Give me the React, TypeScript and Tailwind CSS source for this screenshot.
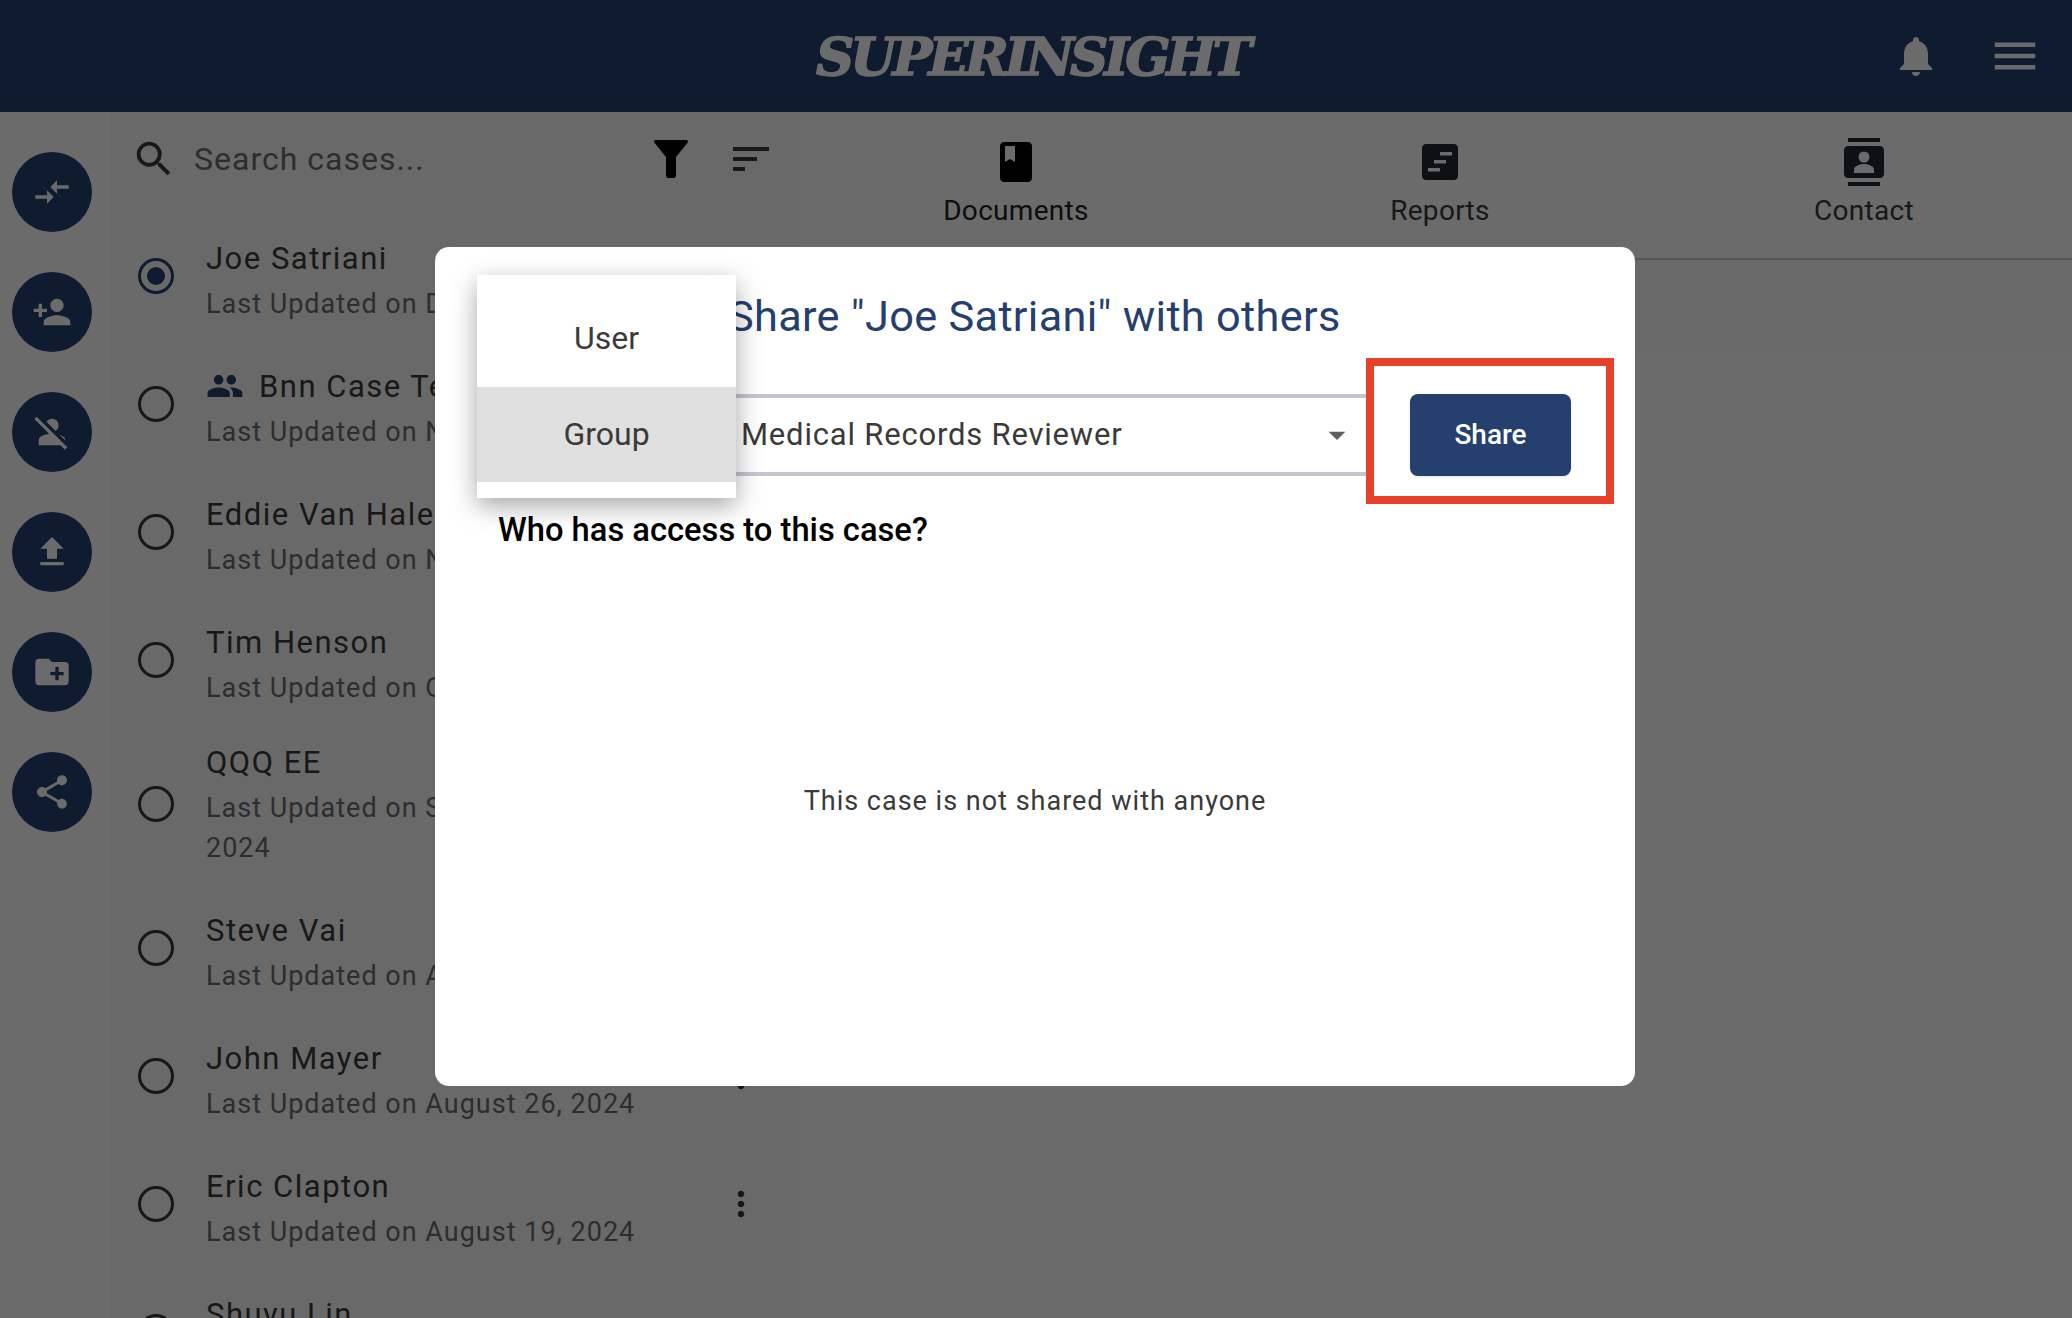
import React from "react";
import {
  MdCompareArrows,
  MdPersonAddAlt1,
  MdPersonOff,
  MdFileUpload,
  MdCreateNewFolder,
  MdShare,
  MdSearch,
  MdSort,
  MdPeople,
  MdMoreVert,
  MdNotifications,
  MdMenu,
  MdArrowDropDown,
} from "react-icons/md";

const sideActions = [
  {Icon: MdCompareArrows},
  {Icon: MdPersonAddAlt1, flip: true},
  {Icon: MdPersonOff},
  {Icon: MdFileUpload},
  {Icon: MdCreateNewFolder},
  {Icon: MdShare},
];

const cases = [
  {name: "Joe Satriani", updated: "Last Updated on December 2, 2024", selected: true},
  {name: "Bnn Case Test", updated: "Last Updated on November 26, 2024", group: true},
  {name: "Eddie Van Halen", updated: "Last Updated on November 12, 2024"},
  {name: "Tim Henson", updated: "Last Updated on October 8, 2024"},
  {name: "QQQ EE", updated: "Last Updated on September 30,", extra: "2024"},
  {name: "Steve Vai", updated: "Last Updated on August 29, 2024"},
  {name: "John Mayer", updated: "Last Updated on August 26, 2024"},
  {name: "Eric Clapton", updated: "Last Updated on August 19, 2024"},
  {name: "Shuyu Lin", updated: "Last Updated on August 12, 2024"},
];

function FunnelIcon() {
  return (
    <svg width="36" height="40" viewBox="0 0 36 40" fill="currentColor">
      <path d="M1 2.5C1 1.5 1.800 1 2.600 1h30.800c.8 0 1.600.5 1.600 1.500 0 .4-.1.7-.3 1L23 18v18.500c0 1.400-1.100 2.500-2.500 2.500h-5c-1.400 0-2.500-1.100-2.500-2.500V18L1.300 3.500c-.2-.3-.3-.6-.3-1z" />
    </svg>
  );
}

function DocumentsIcon() {
  return (
    <svg width="32" height="40" viewBox="0 0 32 40" fill="#000">
      <path fillRule="evenodd" d="M4 0h24c2.200 0 4 1.800 4 4v32c0 2.200-1.800 4-4 4H4c-2.200 0-4-1.800-4-4V4c0-2.200 1.800-4 4-4zm1 4v16l5-3 5 3V4H5z" />
    </svg>
  );
}

function ReportsIcon() {
  return (
    <svg width="36" height="36" viewBox="0 0 36 36" fill="#1f2a2e">
      <path fillRule="evenodd" d="M4 0h28c2.200 0 4 1.800 4 4v28c0 2.200-1.800 4-4 4H4c-2.200 0-4-1.800-4-4V4c0-2.200 1.800-4 4-4zm14 8v3.500h12V8H18zm-6 8v3.500h12V16H12zM6 24v3.500h12V24H6z" />
    </svg>
  );
}

function ContactIcon() {
  return (
    <svg width="40" height="48" viewBox="0 0 40 48" fill="#1f2a2e">
      <rect x="4" y="0" width="32" height="4" />
      <rect x="4" y="44" width="32" height="4" />
      <path fillRule="evenodd" d="M4 8h32c2.200 0 4 1.800 4 4v24c0 2.200-1.800 4-4 4H4c-2.200 0-4-1.800-4-4V12c0-2.200 1.800-4 4-4zm16 5.500a5.500 5.500 0 1 0 0 11 5.500 5.500 0 0 0 0-11zM10 35h20v-3.500c0-3.600-6.700-5.500-10-5.500s-10 1.900-10 5.500V35z" />
    </svg>
  );
}

function CaseRow({item}: {item: any}) {
  return (
    <div className={"flex items-center pl-[28px] pr-[39px] " + (item.extra ? "h-[160px]" : "h-[128px]")}>
      <div className={"flex h-[36px] w-[36px] shrink-0 items-center justify-center rounded-full border-[3px] " + (item.selected ? "border-[#25406f]" : "border-[#3a3a3a]")}>
        {item.selected && <div className="h-[18px] w-[18px] rounded-full bg-[#25406f]" />}
      </div>
      <div className={"ml-[32px] min-w-0 flex-1 " + (item.extra ? "-mt-[4px]" : "pt-[4px]")}>
        <div className="flex items-center whitespace-nowrap text-[31px] leading-[51px] tracking-[1.5px] text-[#3a3a3a]">
          {item.group && <MdPeople className="mr-[15px] text-[#25406f]" size={38} />}
          {item.name}
        </div>
        <div className="whitespace-nowrap text-[27px] leading-[40px] tracking-[1px] text-[#6d6d6d]">
          {item.updated}
        </div>
        {item.extra && (
          <div className="text-[27px] leading-[40px] tracking-[1px] text-[#6d6d6d]">{item.extra}</div>
        )}
      </div>
      <MdMoreVert className="shrink-0 text-[#3a3a3a]" size={40} />
    </div>
  );
}

export default function App() {
  return (
    <div className="relative h-screen w-full overflow-hidden bg-white font-['Roboto',sans-serif]">
      <header className="relative flex h-[112px] items-center justify-center bg-[#25406f]">
        <span className="mr-[8px] text-[53px] font-bold italic leading-none tracking-[-4px] text-white [-webkit-text-stroke:1.5px_white] font-['DejaVu_Serif',serif]">
          SUPERINSIGHT
        </span>
        <div className="absolute right-[30px] top-0 flex h-[112px] items-center gap-[48px] text-white">
          <MdNotifications size={48} />
          <MdMenu size={54} />
        </div>
      </header>

      <div className="flex h-[1206px]">
        <aside className="flex w-[110px] shrink-0 flex-col items-center gap-[40px] pr-[6px] pt-[40px]">
          {sideActions.map(({Icon, flip}, i) => (
            <div key={i} className="flex h-[80px] w-[80px] shrink-0 items-center justify-center rounded-full bg-[#25406f] text-white">
              <Icon size={40} className={flip ? "-scale-x-100" : ""} />
            </div>
          ))}
        </aside>

        <section className="w-[690px] shrink-0 bg-[#fbfbfb]">
          <div className="flex h-[100px] items-center pb-[6px] pl-[21px] pr-[25px] text-[#3a3a3a]">
            <MdSearch size={46} />
            <span className="ml-[17px] flex-1 text-[32px] tracking-[1px] text-[#6d6d6d]">Search cases...</span>
            <span className="text-black"><FunnelIcon /></span>
            <MdSort className="ml-[38px]" size={48} />
          </div>
          <div>
            {cases.map((c) => (
              <CaseRow key={c.name} item={c} />
            ))}
          </div>
        </section>

        <main className="min-w-0 flex-1">
          <div className="grid h-[148px] grid-cols-[repeat(3,424px)] border-b-[2px] border-[#cfcfcf] pl-[4px]">
            <div className="flex flex-col items-center pt-[30px]">
              <div className="flex h-[40px] items-center"><DocumentsIcon /></div>
              <span className="mt-[11px] text-[28px] leading-[36px] tracking-[0.3px] text-[#222]">Documents</span>
            </div>
            <div className="flex flex-col items-center pt-[30px]">
              <div className="flex h-[40px] items-center"><ReportsIcon /></div>
              <span className="mt-[11px] text-[28px] leading-[36px] tracking-[0.3px] text-[#3a3a3a]">Reports</span>
            </div>
            <div className="flex flex-col items-center pt-[30px]">
              <div className="flex h-[40px] items-center"><ContactIcon /></div>
              <span className="mt-[11px] text-[28px] leading-[36px] tracking-[0.3px] text-[#3a3a3a]">Contact</span>
            </div>
          </div>
          <div className="h-[92px] bg-[#fbfbfb]" />
        </main>
      </div>

      {/* dim layer */}
      <div className="absolute inset-0 bg-black/58" />

      {/* share dialog */}
      <div className="absolute left-[435px] top-[247px] h-[839px] w-[1200px] rounded-[14px] bg-white">
        <h2 className="absolute left-[293px] top-[41px] text-[43.3px] leading-[58px] tracking-[0.3px] text-[#25406f]">
          Share "Joe Satriani" with others
        </h2>

        <div className="absolute left-[301px] top-[147px] flex h-[82px] w-[630px] items-center justify-between border-y-[4px] border-[#c6c6d0] pl-[5px] pr-[9px]">
          <span className="text-[31px] tracking-[0.8px] text-[#3a3a3a]">Medical Records Reviewer</span>
          <MdArrowDropDown className="text-[#5f5f5f]" size={40} />
        </div>

        <div className="absolute left-[931px] top-[111px] h-[146px] w-[248px] border-[8px] border-[#e8412a]" />
        <button className="absolute left-[975px] top-[147px] h-[82px] w-[161px] rounded-[8px] bg-[#25406f] text-[28px] font-medium text-white shadow-sm">
          Share
        </button>

        <div className="absolute left-[63px] top-[263px] text-[32.700px] font-medium leading-[40px] text-black">
          Who has access to this case?
        </div>

        <div className="absolute inset-x-0 top-[536px] text-center text-[27px] leading-[36px] tracking-[1px] text-[#3a3a3a]">
          This case is not shared with anyone
        </div>

        {/* type dropdown */}
        <div className="absolute left-[42px] top-[28px] h-[223px] w-[259px] bg-white pb-[16px] shadow-[0_8px_24px_rgba(0,0,0,0.35)]">
          <div className="flex h-[112px] items-center justify-center pt-[14px] text-[32px] text-[#3a3a3a]">User</div>
          <div className="flex h-[95px] items-center justify-center bg-[#e0e0e0] pb-[2px] text-[32px] text-[#3a3a3a]">Group</div>
        </div>
      </div>
    </div>
  );
}
